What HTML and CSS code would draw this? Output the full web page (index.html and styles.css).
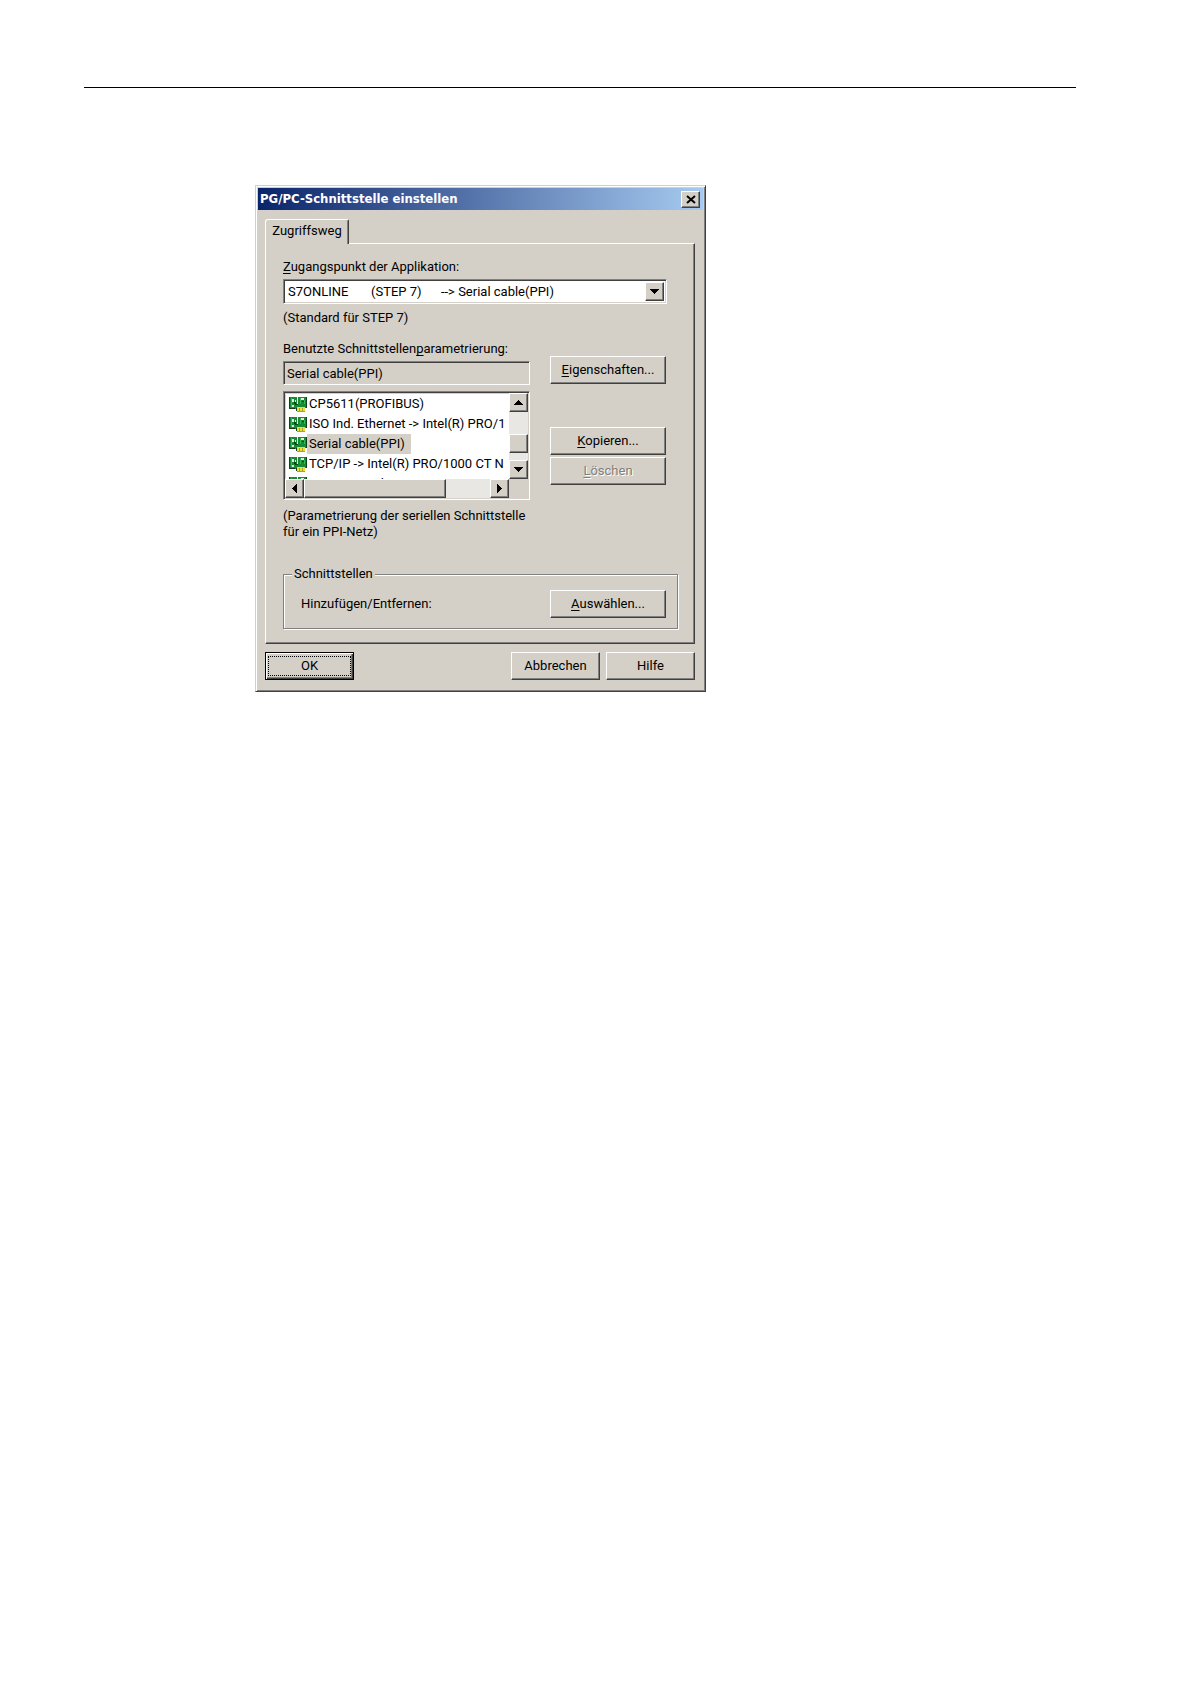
FILE: index.html
```html
<!DOCTYPE html>
<html lang="de">
<head>
<meta charset="utf-8">
<title>PG/PC-Schnittstelle einstellen</title>
<link rel="stylesheet" href="styles.css">
</head>
<body>
<svg class="symbols" aria-hidden="true">
  <symbol id="card" viewBox="0 0 18 16">
    <path fill="#168a35" d="M0 1h8v12H0zM9 1h9v11H9z"/>
    <path fill="#35b955" d="M2 2h1v9H2zM11 2h1v7h-1zM15 4h1v4h-1z"/>
    <path fill="#10401c" d="M0 1h1v12H0zM1 12h5v1H1zM17 1h1v11h-1zM5 6h2v2H5zM13 5h2v1h-2z"/>
    <path fill="#e4efe0" d="M3 3h2v3H3zM6 4h1v2H6zM12 2h3v2h-3zM3 9h2v2H3zM8 1h1v6H8z"/>
    <path fill="#168a35" d="M6 8h11v4H6z"/>
    <path fill="#10401c" d="M6 8h3v1H6zM7 12h1v3H7z"/>
    <path fill="#e8df3a" d="M8 11h8v4H8z"/>
    <path fill="#a8a22c" d="M10 12h1v3h-1zM13 12h1v3h-1zM8 15h8v1H8z"/>
  </symbol>
  <symbol id="up" viewBox="0 0 9 5"><path d="M4 0h1v1h1v1h1v1h1v1h1v1H0V4h1V3h1V2h1V1h1z"/></symbol>
  <symbol id="down" viewBox="0 0 9 5"><path d="M0 0h9v1H8v1H7v1H6v1H5v1H4V4H3V3H2V2H1V1H0z"/></symbol>
  <symbol id="left" viewBox="0 0 5 9"><path d="M5 0v9H4V8H3V7H2V6H1V5H0V4h1V3h1V2h1V1h1V0z"/></symbol>
  <symbol id="right" viewBox="0 0 5 9"><path d="M0 0v9h1V8h1V7h1V6h1V5h1V4H4V3H3V2H2V1H1V0z"/></symbol>
</svg>
<main class="page">
  <hr class="page-rule">
  <section class="dialog" role="dialog" aria-labelledby="dialog-title">
    <header class="titlebar">
      <h1 class="title" id="dialog-title">PG/PC-Schnittstelle einstellen</h1>
      <button class="btn close" type="button" aria-label="Schließen"><svg width="10" height="9" viewBox="0 0 10 9"><path d="M1 1l8 7M9 1L1 8" stroke="#000" stroke-width="2"/></svg></button>
    </header>
    <form class="content">
      <div class="tabs" role="tablist"><button class="tab" type="button" role="tab" aria-selected="true">Zugriffsweg</button></div>
      <div class="panel" role="tabpanel">
        <label class="label" for="access"><u>Z</u>ugangspunkt der Applikation:</label>
        <div class="combo">
          <select class="combo-select" id="access"><option>S7ONLINE&nbsp;&nbsp;&nbsp;&nbsp;&nbsp;&nbsp;&nbsp;(STEP 7)&nbsp;&nbsp;&nbsp;&nbsp;&nbsp;&nbsp;--&gt; Serial cable(PPI)</option></select>
          <span class="btn combo-arrow"><svg width="9" height="5"><use href="#down"/></svg></span>
        </div>
        <p class="note">(Standard für STEP 7)</p>
        <div class="columns">
          <div class="params">
            <label class="label" for="used">Benutzte Schnittstellen<u>p</u>arametrierung:</label>
            <input class="field" id="used" type="text" value="Serial cable(PPI)" readonly>
            <div class="listbox">
              <ul class="items" role="listbox" aria-label="Schnittstellen">
                <li class="item" role="option"><svg class="card"><use href="#card"/></svg><span class="item-text">CP5611(PROFIBUS)</span></li>
                <li class="item" role="option"><svg class="card"><use href="#card"/></svg><span class="item-text">ISO Ind. Ethernet -&gt; Intel(R) PRO/1</span></li>
                <li class="item" role="option" aria-selected="true"><svg class="card"><use href="#card"/></svg><span class="item-text selected">Serial cable(PPI)</span></li>
                <li class="item" role="option"><svg class="card"><use href="#card"/></svg><span class="item-text">TCP/IP -&gt; Intel(R) PRO/1000 CT N</span></li>
                <li class="item" role="option"><svg class="card"><use href="#card"/></svg><span class="item-text">TCP/IP -&gt; NdisWanIp</span></li>
              </ul>
              <div class="track vertical">
                <button class="btn arrow" type="button" aria-label="Nach oben"><svg width="9" height="5"><use href="#up"/></svg></button>
                <span class="space-before"></span>
                <span class="btn arrow"></span>
                <span class="space-after"></span>
                <button class="btn arrow" type="button" aria-label="Nach unten"><svg width="9" height="5"><use href="#down"/></svg></button>
              </div>
              <div class="track">
                <button class="btn arrow" type="button" aria-label="Nach links"><svg width="5" height="9"><use href="#left"/></svg></button>
                <span class="btn thumb"></span>
                <span class="space-after"></span>
                <button class="btn arrow" type="button" aria-label="Nach rechts"><svg width="5" height="9"><use href="#right"/></svg></button>
              </div>
            </div>
            <p class="description">(Parametrierung der seriellen Schnittstelle<br>für ein PPI-Netz)</p>
          </div>
          <div class="actions">
            <button class="btn wide" type="button"><span><u>E</u>igenschaften...</span></button>
            <button class="btn wide second" type="button"><span><u>K</u>opieren...</span></button>
            <button class="btn wide" type="button" disabled><span><u>L</u>öschen</span></button>
          </div>
        </div>
        <fieldset class="group">
          <legend class="legend">Schnittstellen</legend>
          <div class="group-row">
            <span>Hinzufügen/Entfernen:</span>
            <button class="btn wide" type="button"><span><u>A</u>uswählen...</span></button>
          </div>
        </fieldset>
      </div>
      <footer class="footer">
        <button class="btn command default" type="button"><span class="focus">OK</span></button>
        <button class="btn command" type="button">Abbrechen</button>
        <button class="btn command" type="button">Hilfe</button>
      </footer>
    </form>
  </section>
</main>
</body>
</html>
```
FILE: styles.css
```css
* { box-sizing: border-box; }
body {
  margin: 0;
  background: #fff;
  color: #000;
  font: 13px/16px Roboto, "Liberation Sans", Arial, sans-serif;
}
button, input, select { font: inherit; color: inherit; margin: 0; border-radius: 0; }
u { text-underline-offset: 2px; text-decoration-skip-ink: none; }
p { margin: 0; }
.symbols { position: absolute; width: 0; height: 0; }

.page { padding: 87px 114px 80px 84px; }
.page-rule { margin: 0 0 97px; border: 0; border-top: 1px solid #000; }

.dialog {
  max-width: 451px;
  margin-left: 171px;
  padding: 2px;
  background: #d4d0c8;
  border: 1px solid;
  border-color: #d4d0c8 #404040 #404040 #d4d0c8;
  box-shadow: inset 1px 1px #fff, inset -1px -1px #808080;
}
.titlebar {
  display: flex;
  align-items: center;
  justify-content: space-between;
  height: 22px;
  padding: 0 3px 0 2px;
  background: linear-gradient(90deg, #0a246a, #a6caf0);
}
.title {
  margin: 0;
  color: #fff;
  font: bold 13px/20px "DejaVu Sans Condensed", "DejaVu Sans", sans-serif;
}

.btn {
  display: flex;
  align-items: center;
  justify-content: center;
  padding: 0;
  background: #d4d0c8;
  border: 1px solid;
  border-color: #fff #404040 #404040 #fff;
  box-shadow: inset -1px -1px #808080;
}
.close { width: 19px; height: 17px; }

.content { padding: 9px 8px 9px 7px; }
.tabs { display: flex; }
.tab {
  height: 25px;
  width: 84px;
  margin-bottom: -1px;
  padding: 0 0 2px;
  background: #d4d0c8;
  border: 1px solid;
  border-color: #fff #404040 transparent #fff;
  border-bottom: 0;
  border-radius: 3px 2px 0 0;
  box-shadow: inset -1px 0 #808080;
  position: relative;
}
.panel {
  padding: 15px 16px 14px 17px;
  border: 1px solid;
  border-color: #fff #404040 #404040 #fff;
  box-shadow: inset -1px -1px #808080;
}
.label { display: block; white-space: nowrap; }

.combo, .field, .listbox {
  border: 1px solid;
  border-color: #808080 #fff #fff #808080;
  box-shadow: inset 1px 1px #404040, inset -1px -1px #d4d0c8;
}
.combo {
  display: grid;
  grid-template-columns: 1fr 19px;
  height: 25px;
  margin: 4px 11px 0 0;
  padding: 2px;
  background-color: #fff;
}
.combo-select {
  grid-area: 1 / 1 / 2 / 3;
  appearance: none;
  width: 100%;
  padding: 0 2px;
  background: transparent;
  border: 0;
  outline: 0;
}
.combo-arrow { grid-area: 1 / 2; pointer-events: none; }
.note { margin-top: 6px; }

.columns { display: flex; gap: 20px; margin-top: 15px; }
.params { flex: 0 1 247px; min-width: 0; }
.field {
  display: block;
  width: 100%;
  height: 24px;
  margin-top: 4px;
  padding: 0 3px;
  background-color: #d4d0c8;
  outline: 0;
}
.listbox {
  display: grid;
  grid-template: 86px 19px / 1fr 19px;
  margin-top: 6px;
  padding: 1px;
  background-color: #d4d0c8;
}
.items {
  margin: 1px 0 0 1px;
  padding: 0 0 0 3px;
  overflow: hidden;
  list-style: none;
  background: #fff;
}
.item { display: flex; align-items: center; height: 20px; white-space: nowrap; }
.card { flex: none; width: 18px; height: 16px; }
.item-text { padding: 2px; }
.selected { padding-right: 6px; background: #d4d0c8; }
.track { display: flex; background: #e9e7e3; }
.vertical { flex-direction: column; }
.arrow { flex: none; width: 19px; height: 19px; }
.thumb { flex: 0 1 142px; }
.space-before { flex: 3; }
.space-after { flex: 1; }
.description { margin-top: 8px; white-space: nowrap; }

.actions { display: flex; flex-direction: column; padding-top: 15px; }
.wide { width: 116px; height: 28px; }
.actions .wide { margin-bottom: 2px; }
.actions .second { margin-top: 41px; }
.btn:disabled { color: #808080; text-shadow: 1px 1px #fff; }

.group {
  margin: 26px 0 0;
  padding: 0 11px 10px 17px;
  border: 1px solid #808080;
  box-shadow: 1px 1px #fff, inset 1px 1px #fff;
}
.legend { margin-left: -9px; padding: 0 2px; background: #d4d0c8; }
.group-row { display: flex; align-items: center; justify-content: space-between; padding-top: 8px; }

.footer { display: flex; gap: 6px; margin-top: 8px; }
.command { width: 89px; height: 28px; }
.default {
  margin-right: auto;
  padding: 2px;
  border-color: #000;
  box-shadow: inset 1px 1px #fff, inset -1px -1px #404040, inset -2px -2px #808080;
}
.focus { width: 100%; border: 1px dotted #000; line-height: 18px; }
```
